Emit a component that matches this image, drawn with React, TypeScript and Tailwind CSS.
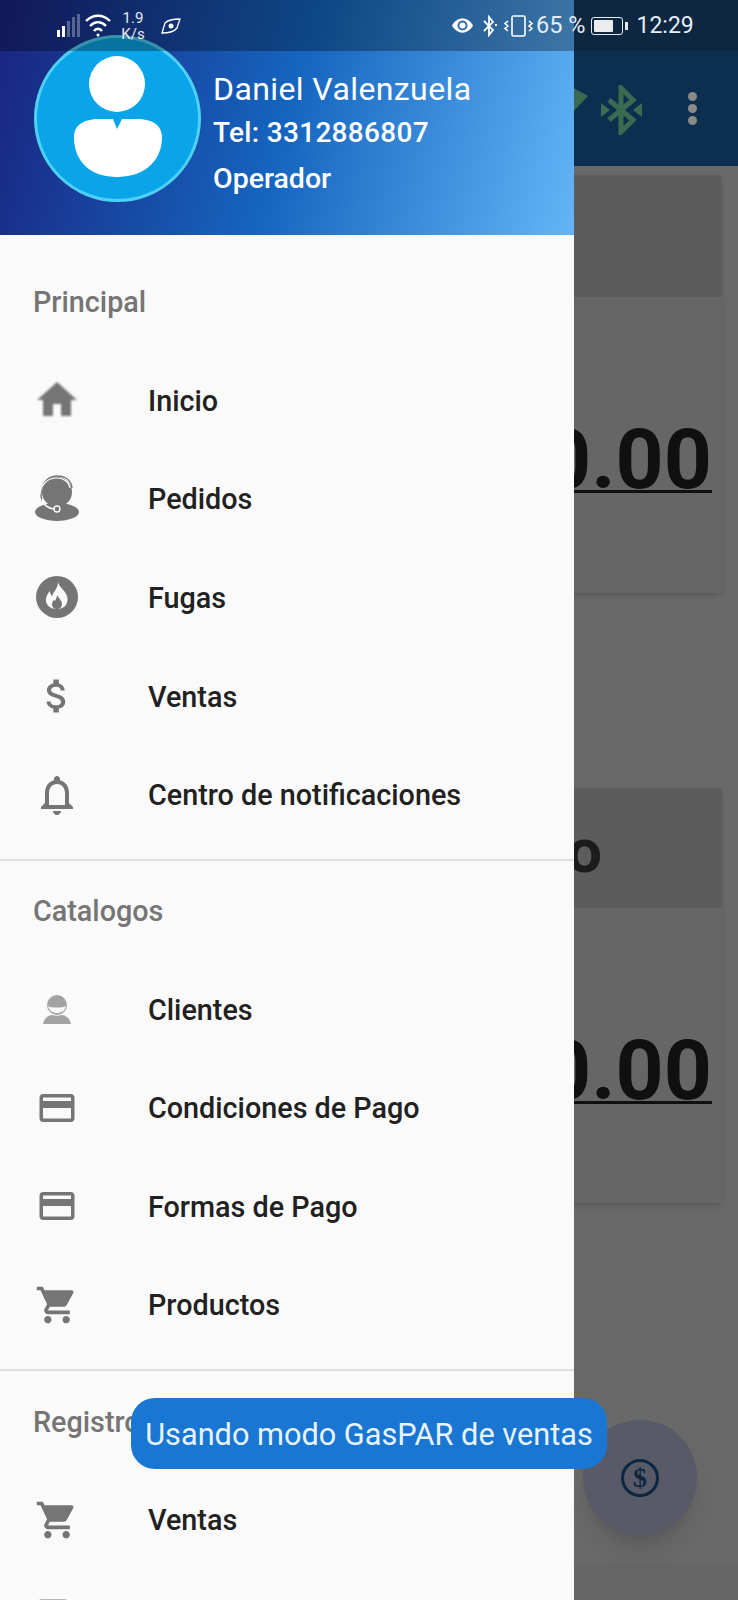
const iconGray = "#757575";

function Svg({ size, d, color = iconGray, className }: { size: number; d: string; color?: string; className?: string }) {
  return (
    <svg className={className} width={size} height={size} viewBox="0 0 24 24" fill={color}>
      <path d={d} />
    </svg>
  );
}

const homePath = "M10 20v-6h4v6h5v-8h3L12 3 2 12h3v8z";
const moneyPath =
  "M11.8 10.9c-2.27-.59-3-1.2-3-2.15 0-1.09 1.01-1.85 2.7-1.85 1.78 0 2.44.85 2.5 2.1h2.21c-.07-1.72-1.12-3.3-3.21-3.81V3h-3v2.16c-1.94.42-3.5 1.68-3.5 3.61 0 2.31 1.91 3.46 4.7 4.13 2.5.6 3 1.48 3 2.41 0 .69-.49 1.79-2.7 1.79-2.06 0-2.87-.92-2.98-2.1h-2.2c.12 2.19 1.76 3.42 3.68 3.83V21h3v-2.15c1.95-.37 3.5-1.5 3.5-3.55 0-2.84-2.43-3.81-4.7-4.4z";
const bellPath =
  "M12 22c1.1 0 2-.9 2-2h-4c0 1.1.89 2 2 2zm6-6v-5c0-3.07-1.64-5.64-4.5-6.32V4c0-.83-.67-1.5-1.5-1.5s-1.5.67-1.5 1.5v.68C7.63 5.36 6 7.92 6 11v5l-2 2v1h16v-1l-2-2zm-2 1H8v-6c0-2.48 1.51-4.5 4-4.5s4 2.02 4 4.5v6z";
const cardPath =
  "M20 4H4c-1.11 0-1.99.89-1.99 2L2 18c0 1.11.89 2 2 2h16c1.11 0 2-.89 2-2V6c0-1.11-.89-2-2-2zm0 14H4v-6h16v6zm0-10H4V6h16v2z";
const cartPath =
  "M7 18c-1.1 0-1.99.9-1.99 2S5.9 22 7 22s2-.9 2-2-.9-2-2-2zM1 2v2h2l3.6 7.59-1.35 2.45c-.16.29-.25.62-.25.96 0 1.1.9 2 2 2h12v-2H7.42c-.14 0-.25-.11-.25-.25l.03-.12L8.1 13h7.45c.75 0 1.41-.41 1.75-1.03l3.58-6.49c.08-.14.12-.31.12-.48 0-.55-.45-1-1-1H5.21l-.94-2H1zm16 16c-1.1 0-1.99.9-1.99 2s.89 2 1.99 2 2-.9 2-2-.9-2-2-2z";

function AgentIcon() {
  return (
    <svg width="48" height="48" viewBox="0 0 48 48">
      <ellipse cx="24" cy="37" rx="22" ry="9" fill={iconGray} />
      <circle cx="24" cy="17" r="15" fill={iconGray} />
      <path d="M9 26 C5 11 14 1 24 1 C32 1 38 5 39 13" fill="none" stroke={iconGray} strokeWidth="1.4" />
      <path d="M7 19 C8 9 15 3 24 3 C31 3 36 7 37 13" fill="none" stroke="#fafafa" strokeWidth="1.2" />
      <path d="M9 24 C10 30 15 33 21 34" fill="none" stroke="#fafafa" strokeWidth="1.6" />
      <circle cx="24" cy="34" r="3" fill={iconGray} stroke="#fafafa" strokeWidth="1.4" />
    </svg>
  );
}

function FireIcon() {
  return (
    <svg width="48" height="48" viewBox="0 0 48 48">
      <circle cx="24" cy="24" r="21" fill={iconGray} />
      <path
        d="M25 9c1 5 7 8 9 14 2 7-2 13-10 13s-12-5-11-11c1-3 2-5 4-7 0 3 1 4 2 5 2-5 6-8 6-14z"
        fill="#fafafa"
      />
      <path d="M24 22c1 3 5 5 5 9 0 3-2 5-5 5s-5-2-5-5c0-2 1-3 2-4 1 1 1 1 1 1 1-2 2-4 2-6z" fill={iconGray} />
    </svg>
  );
}

function ClientIcon() {
  return (
    <svg width="48" height="48" viewBox="0 0 48 48">
      <circle cx="24" cy="20" r="10" fill="#a3a3a3" />
      <path d="M15 21c3 2 15 2 18 0-1 5-5 7-9 7s-8-2-9-7z" fill="#fafafa" />
      <path d="M10 39c1-6 6-9 9-9 3 1 7 1 10 0 3 0 8 3 9 9z" fill="#a3a3a3" />
    </svg>
  );
}

function PartialIcon() {
  return (
    <svg width="48" height="48" viewBox="0 0 48 48" fill="none">
      <path d="M6 14V9a2 2 0 0 1 2-2h24a2 2 0 0 1 2 2v5" stroke={iconGray} strokeWidth="3" />
    </svg>
  );
}

function Row({ icon, label }: { icon: React.ReactNode; label?: string }) {
  return (
    <div className="flex h-[98.6px] items-center">
      <div className="flex w-[148px] shrink-0 justify-center pr-[34px]">{icon}</div>
      <span className="mt-[2px] text-[28.75px] font-[470] text-[#212121]">{label}</span>
    </div>
  );
}

function SectionTitle({ children }: { children: React.ReactNode }) {
  return <div className="flex h-[99px] items-center pt-[3px] pl-[33px] text-[28.75px] font-[470] text-[#757575]">{children}</div>;
}

function Divider() {
  return <div className="mt-[15px] h-[2px] bg-[#e0e0e0]" />;
}

function Card({ title, height, headerHeight }: { title: string; height: string; headerHeight: string }) {
  return (
    <div className={`mx-4 overflow-hidden rounded-[4px] bg-[#666666] shadow-md ${height}`}>
      <div className={`flex items-end justify-end bg-[#5c5c5c] pr-[120px] pb-[26px] text-[62px] leading-none font-bold text-[#1c1c1c] ${headerHeight}`}>
        {title}
      </div>
      <div className="flex justify-end pt-[121px] pr-[10px] text-[84px] leading-none font-bold text-[#101010] underline decoration-[3px] underline-offset-2">
        $0.00
      </div>
    </div>
  );
}

function BluetoothSearch() {
  return (
    <svg width="42" height="50" viewBox="0 0 42 50" fill="none">
      <path d="M8 15 L32 35 L20 47 V3 L32 15 L8 35" stroke="#3a6a50" strokeWidth="5" />
      <path d="M0 18 L9 25 L0 32z M41 18 L32 25 L41 32z" fill="#3a6a50" />
    </svg>
  );
}

function StatusBar() {
  return (
    <div className="absolute top-0 left-0 flex h-[51px] w-[738px] text-white">
      <div className="h-full w-[574px] bg-black/30" />
      <div className="h-full flex-1 bg-[#0e2740]" />
      <div className="absolute inset-0 flex items-center font-normal">
        <div className="ml-[57px] flex h-[23px] items-end gap-[2px]">
          <div className="h-[7px] w-[3px] bg-white" />
          <div className="h-[11px] w-[3px] bg-white" />
          <div className="h-[16px] w-[3px] bg-white/30" />
          <div className="h-[20px] w-[3px] bg-white/30" />
          <div className="h-[23px] w-[3px] bg-white/30" />
        </div>
        <svg className="ml-[5px]" width="26" height="26" viewBox="0 0 26 26" fill="none" stroke="white" strokeWidth="2.4">
          <path d="M1 8 C8 1 18 1 25 8" />
          <path d="M5 13 C10 8 16 8 21 13" />
          <path d="M9 18 C11 15 15 15 17 18" />
          <circle cx="13" cy="22" r="1.5" fill="white" stroke="none" />
        </svg>
        <div className="ml-[8px] flex w-[28px] flex-col items-center text-[15px] leading-[16px] text-white/90">
          <span>1.9</span>
          <span>K/s</span>
        </div>
        <svg className="ml-[14px]" width="20" height="16" viewBox="0 0 20 16" fill="none" stroke="white" strokeWidth="1.3">
          <path d="M1 15 L4 5 C7 2 13 1 19 1 L16 10 C13 14 7 15 1 15z" />
          <circle cx="10" cy="8" r="2.5" fill="white" stroke="none" />
        </svg>
        <svg className="ml-[270px]" width="23" height="17" viewBox="0 0 23 17" fill="none">
          <path d="M1 8.5 C6 -1 17 -1 22 8.5 C17 18 6 18 1 8.5z" fill="white" />
          <circle cx="11.5" cy="8.5" r="5" fill="#2f6cad" />
          <circle cx="11.5" cy="8.5" r="3" fill="white" />
        </svg>
        <svg className="ml-[7px]" width="17" height="22" viewBox="0 0 17 22" fill="none" stroke="white" strokeWidth="1.8">
          <path d="M3 6 L12 15 L8 20 V2 L12 7 L3 16" />
          <path d="M14 10 h2" />
        </svg>
        <svg className="ml-[5px]" width="32" height="22" viewBox="0 0 32 22" fill="none" stroke="white" strokeWidth="1.6">
          <rect x="9" y="1" width="13" height="20" rx="1.5" />
          <path d="M5 6 L2 8.5 L5 11 L2 13.5 L5 16" />
          <path d="M26 6 L29 8.5 L26 11 L29 13.5 L26 16" />
        </svg>
        <span className="ml-[1px] text-[23.5px] leading-none text-[#e3eef8]">65 %</span>
        <div className="ml-[6px] flex h-[18px] w-[32px] items-stretch rounded-[3px] border-[1.5px] border-white/90 p-[2px]">
          <div className="w-[19px] rounded-[1px] bg-[#ececec]" />
        </div>
        <div className="ml-[2px] h-[8px] w-[3px] bg-white/90" />
        <span className="ml-[8px] text-[23px] leading-none text-[#e3eef8]">12:29</span>
      </div>
    </div>
  );
}

function Avatar() {
  return (
    <div className="absolute top-[35px] left-[34px] h-[167px] w-[167px] rounded-full border-[3px] border-[#4fd0f5] bg-[#09a5e8]">
      <svg width="161" height="161" viewBox="0 0 161 161" className="block">
        <ellipse cx="80" cy="46" rx="28" ry="28" fill="white" />
        <path
          d="M62 81 L76 81 L80 91 L85 81 L100 81 C115 81 125 87 125 99 C125 125 105 139 80 139 C55 139 37 125 37 99 C37 87 47 81 62 81z"
          fill="white"
        />
      </svg>
    </div>
  );
}

function Drawer() {
  return (
    <div className="absolute top-0 left-0 h-[1600px] w-[574px] overflow-hidden bg-[#fafafa]">
      <div className="relative h-[235px] bg-[linear-gradient(105deg,#1a237e_0%,#1565c0_50%,#64b5f6_100%)]">
        <Avatar />
        <div className="absolute top-[66px] left-[213px] flex flex-col text-white">
          <span className="text-[32px] leading-[46px] tracking-[0.4px]">Daniel Valenzuela</span>
          <span className="mt-[-2px] text-[28px] leading-[46px] font-medium tracking-[0.3px]">Tel: 3312886807</span>
          <span className="text-[28.5px] leading-[46px] font-medium">Operador</span>
        </div>
      </div>
      <div className="pt-[17px]">
        <SectionTitle>Principal</SectionTitle>
        <Row icon={<Svg size={48} d={homePath} className="blur-[1px]" />} label="Inicio" />
        <Row icon={<AgentIcon />} label="Pedidos" />
        <Row icon={<FireIcon />} label="Fugas" />
        <Row icon={<Svg size={44} d={moneyPath} />} label="Ventas" />
        <Row icon={<Svg size={48} d={bellPath} />} label="Centro de notificaciones" />
        <Divider />
        <SectionTitle>Catalogos</SectionTitle>
        <Row icon={<ClientIcon />} label="Clientes" />
        <Row icon={<Svg size={42} d={cardPath} />} label="Condiciones de Pago" />
        <Row icon={<Svg size={42} d={cardPath} />} label="Formas de Pago" />
        <Row icon={<Svg size={44} d={cartPath} />} label="Productos" />
        <Divider />
        <SectionTitle>Registros</SectionTitle>
        <Row icon={<Svg size={44} d={cartPath} />} label="Ventas" />
        <Row icon={<PartialIcon />} />
      </div>
    </div>
  );
}

export default function App() {
  return (
    <div className="relative h-[1600px] w-[738px] overflow-hidden bg-[#696969] font-['Roboto',sans-serif]">
      <div className="flex h-[166px] items-start justify-end bg-[#0d2f4f] pt-[85px] pr-[41px]">
        <svg className="mt-[2px] mr-[13px]" width="16" height="26" viewBox="0 0 16 26">
          <path d="M0 0 L16 9 L0 26z" fill="#3a6a50" />
        </svg>
        <BluetoothSearch />
        <div className="ml-[45px] flex flex-col gap-[3px] pt-[7px]">
          <div className="h-[9px] w-[9px] rounded-full bg-[#8a8a8a]" />
          <div className="h-[9px] w-[9px] rounded-full bg-[#8a8a8a]" />
          <div className="h-[9px] w-[9px] rounded-full bg-[#8a8a8a]" />
        </div>
      </div>
      <div className="flex flex-col gap-[195px] pt-[9px]">
        <Card title="" height="h-[418px]" headerHeight="h-[122px]" />
        <Card title="Saldo" height="h-[415px]" headerHeight="h-[120px]" />
      </div>

      <div className="absolute bottom-0 left-[574px] h-[37px] w-[164px] bg-[#666666]" />
      <div className="absolute top-[1420px] left-[583px] flex h-[115px] w-[114px] items-center justify-center rounded-full bg-[#585a68] shadow-xl">
        <div className="flex h-[38px] w-[38px] items-center justify-center rounded-full border-[3px] border-[#0e2740] font-['Liberation_Serif',serif] text-[28px] leading-none font-bold text-[#0e2740]">
          $
        </div>
      </div>

      <Drawer />
      <StatusBar />

      <div className="absolute top-[1398px] left-[131px] flex h-[71px] w-[476px] items-center justify-center rounded-[24px] bg-[#1976d2] pt-[3px] text-[30.7px] text-[#e8f4fd]">
        Usando modo GasPAR de ventas
      </div>
    </div>
  );
}
